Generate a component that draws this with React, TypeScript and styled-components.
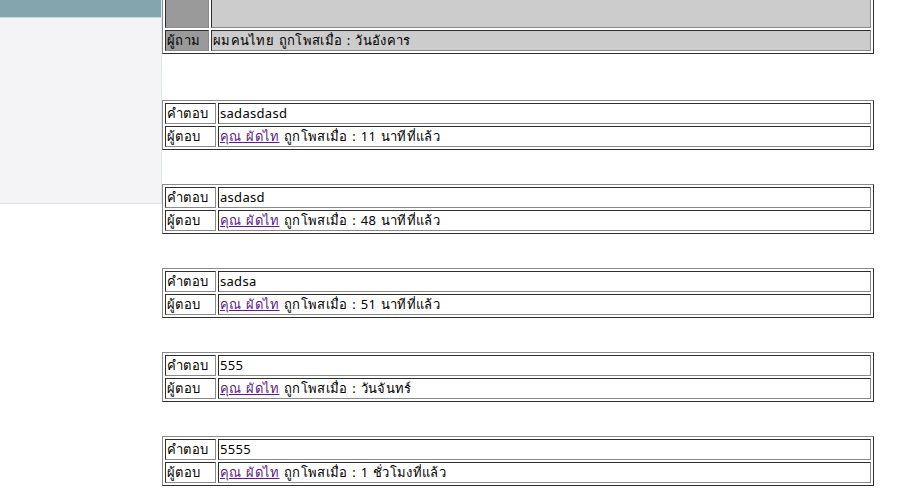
import styled, { createGlobalStyle } from "styled-components";

const GlobalStyle = createGlobalStyle`
  html, body {
    margin: 0;
    padding: 0;
    background: #fff;
    overflow: hidden;
  }
  body {
    font-family: Tahoma, "Noto Sans", "DejaVu Sans", sans-serif;
    font-size: 13px;
    color: #000;
  }
`;

type Answer = {
  text: string;
  when: string;
};

const answers: Answer[] = [
  { text: "sadasdasd", when: "11 นาทีที่แล้ว" },
  { text: "asdasd", when: "48 นาทีที่แล้ว" },
  { text: "sadsa", when: "51 นาทีที่แล้ว" },
  { text: "555", when: "วันจันทร์" },
  { text: "5555", when: "1 ชั่วโมงที่แล้ว" },
];

const Page = styled.div`
  display: flex;
  align-items: flex-start;
  width: 910px;
  height: 493px;
  overflow: hidden;
`;

const Sidebar = styled.div`
  width: 161px;
  height: 203px;
  flex-shrink: 0;
  display: flex;
  flex-direction: column;
  background: #f4f4f6;
  border-right: 1px solid #e4e6e8;
  border-bottom: 1px solid #e2e2e2;
`;

const SidebarHead = styled.div`
  height: 17px;
  background: #84a5ad;
  border-bottom: 1px solid #c9d6d9;
`;

const Main = styled.div`
  width: 712px;
  display: flex;
  flex-direction: column;
  gap: 34px;
`;

const Table = styled.table<{ $question?: boolean }>`
  width: 100%;
  border-collapse: separate;
  border-spacing: 2px;
  border-style: solid;
  border-width: 1px;
  border-color: #8a8a8a #2e2e2e #2e2e2e #8a8a8a;
  margin-top: ${(p) => (p.$question ? "-35px" : "0")};
  margin-bottom: ${(p) => (p.$question ? "12px" : "0")};
`;

const Cell = styled.td<{ $tone?: "dark" | "light"; $labelWidth?: number; $tall?: boolean }>`
  border-style: solid;
  border-width: 1px;
  border-color: #2e2e2e #8a8a8a #8a8a8a #2e2e2e;
  padding: 1px 1px;
  height: ${(p) => (p.$tall ? "56px" : "17px")};
  line-height: 17px;
  letter-spacing: 0.3px;
  word-spacing: 1px;
  white-space: nowrap;
  width: ${(p) => (p.$labelWidth ? `${p.$labelWidth}px` : "auto")};
  background: ${(p) =>
    p.$tone === "dark" ? "#9a9a9a" : p.$tone === "light" ? "#cccccc" : "transparent"};
`;

const Author = styled.a`
  color: #551a8b;
  text-decoration: underline;
`;

export default function App() {
  return (
    <>
      <GlobalStyle />
      <Page>
        <Sidebar>
          <SidebarHead />
        </Sidebar>
        <Main>
          <Table $question>
            <tbody>
              <tr>
                <Cell $tone="dark" $labelWidth={40} $tall />
                <Cell $tone="light" $tall />
              </tr>
              <tr>
                <Cell $tone="dark" $labelWidth={40}>ผู้ถาม</Cell>
                <Cell $tone="light">ผมคนไทย ถูกโพสเมื่อ : วันอังคาร</Cell>
              </tr>
            </tbody>
          </Table>
          {answers.map((a, i) => (
            <Table key={i}>
              <tbody>
                <tr>
                  <Cell $labelWidth={47}>คำตอบ</Cell>
                  <Cell>{a.text}</Cell>
                </tr>
                <tr>
                  <Cell $labelWidth={47}>ผู้ตอบ</Cell>
                  <Cell>
                    <Author href="#">คุณ ผัดไท</Author> ถูกโพสเมื่อ : {a.when}
                  </Cell>
                </tr>
              </tbody>
            </Table>
          ))}
        </Main>
      </Page>
    </>
  );
}
